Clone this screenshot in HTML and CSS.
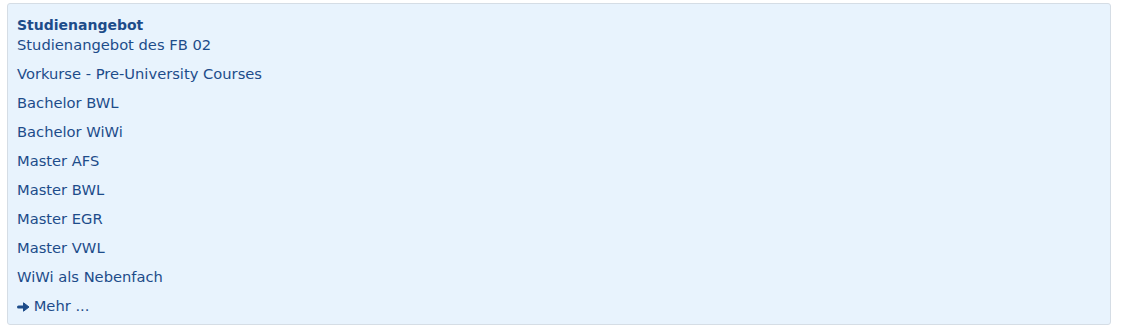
FILE: index.html
```html
<!DOCTYPE html>
<html lang="de">
<head>
    <meta charset="UTF-8">
    <title>Studienangebot</title>
    <link rel="stylesheet" href="styles.css">
</head>
<body>
    <div class="box">
        <h2 class="box-title">Studienangebot</h2>
        <ul class="link-list">
            <li class="first"><a href="#">Studienangebot des FB 02</a></li>
            <li><a href="#">Vorkurse - Pre-University Courses</a></li>
            <li><a href="#">Bachelor BWL</a></li>
            <li><a href="#">Bachelor WiWi</a></li>
            <li><a href="#">Master AFS</a></li>
            <li><a href="#">Master BWL</a></li>
            <li><a href="#">Master EGR</a></li>
            <li><a href="#">Master VWL</a></li>
            <li><a href="#">WiWi als Nebenfach</a></li>
            <li class="more">
                <a href="#">
                    <svg class="arrow" width="13" height="10" viewBox="0 0 13 10"><path d="M1.5 5H7.5" stroke="currentColor" stroke-width="3" stroke-linecap="round"/><path d="M6.5 0.8L12 5L6.5 9.2Z" fill="currentColor" stroke="currentColor" stroke-width="1" stroke-linejoin="round"/></svg>
                    Mehr ...
                </a>
            </li>
        </ul>
    </div>
</body>
</html>
```

FILE: styles.css
```css
* {
    margin: 0;
    padding: 0;
    box-sizing: border-box;
}
body {
    font-family: "DejaVu Sans", Verdana, sans-serif;
    font-size: 14.7px;
    color: #1d4c8a;
    background: #ffffff;
    padding: 3px 10px 0 7px;
}
.box {
    background: #e8f3fd;
    border: 1px solid #d5dde5;
    border-radius: 3px;
    height: 322px;
    padding: 11px 9px 8px;
}
.box-title {
    font-size: 14px;
    font-weight: bold;
    line-height: 20px;
    margin-bottom: 1px;
}
.link-list {
    list-style: none;
}
.link-list li {
    line-height: 17px;
    margin-top: 12px;
}
.link-list li.first {
    margin-top: 0;
}
.link-list a {
    color: #1d4c8a;
    text-decoration: none;
}
.arrow {
    vertical-align: -1px;
    margin-right: -1px;
}
```
